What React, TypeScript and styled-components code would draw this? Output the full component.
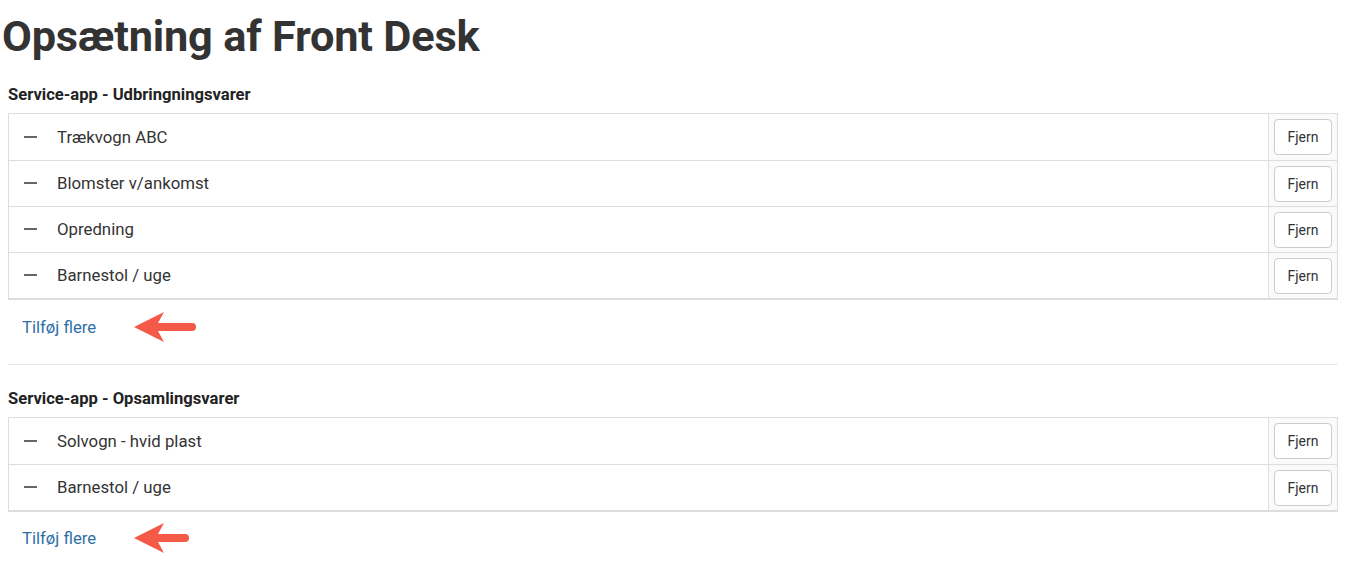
import React from "react";
import styled, { createGlobalStyle } from "styled-components";

const Global = createGlobalStyle`
  html, body { margin: 0; padding: 0; background: #fff; }
  body { font-family: Roboto, "Liberation Sans", Arial, sans-serif; color: #333; }
  * { box-sizing: border-box; }
`;

const Page = styled.div`
  padding: 0 11px 0 8px;
`;

const Title = styled.h1`
  margin: 0 0 0 -6px;
  padding-top: 9px;
  font-size: 43.3px;
  font-weight: 700;
  line-height: 56px;
  color: #333;
  letter-spacing: -0.2px;
`;

const SectionTitle = styled.h4`
  margin: 0;
  font-size: 16.6px;
  font-weight: 700;
  line-height: 20px;
  color: #222;
`;

const Section = styled.section<{ $top: number }>`
  padding-top: ${(p) => p.$top}px;
  display: flex;
  flex-direction: column;
`;

const Table = styled.div`
  margin-top: 8px;
  border: 1px solid #ddd;
  border-bottom: 2px solid #ddd;
  display: flex;
  flex-direction: column;
`;

const Row = styled.div`
  display: grid;
  grid-template-columns: 1fr 69px;
  height: 46px;
  & + & {
    border-top: 1px solid #ddd;
  }
`;

const NameCell = styled.div`
  display: flex;
  align-items: center;
  padding-left: 15px;
  padding-bottom: 1px;
  font-size: 16.8px;
  color: #333;
`;

const Dash = styled.span`
  display: inline-block;
  width: 13px;
  height: 2px;
  background: #666;
  margin-right: 20px;
`;

const ActionCell = styled.div`
  border-left: 1px solid #ddd;
  background: #fafafa;
  display: flex;
  align-items: center;
  justify-content: center;
`;

const RemoveButton = styled.button`
  width: 58px;
  height: 36px;
  border: 1px solid #ccc;
  border-radius: 4px;
  background: #fff;
  font-family: Roboto, "Liberation Sans", Arial, sans-serif;
  font-size: 14px;
  color: #333;
  padding: 0;
  cursor: pointer;
`;

const AddRow = styled.div<{ $h: number; $after: number }>`
  display: flex;
  align-items: center;
  gap: 38px;
  padding-left: 14px;
  height: ${(p) => p.$h}px;
  margin-bottom: ${(p) => p.$after}px;
`;

const AddLink = styled.a`
  font-size: 16.7px;
  color: #2f6fa7;
  text-decoration: none;
  cursor: pointer;
`;

const Divider = styled.hr`
  margin: 0;
  border: 0;
  border-top: 1px solid #e8e8e8;
`;

const Arrow = ({ w }: { w: number }) => (
  <svg width={w} height={32} viewBox={`0 0 ${w} 32`} style={{ display: "block" }}>
    <path
      d={`M0 16 L30 1 L24 12 L${w - 4} 12 A4 4 0 0 1 ${w - 4} 20 L24 20 L30 31 Z`}
      fill="#f45a47"
    />
  </svg>
);

const List = ({ items }: { items: string[] }) => (
  <Table>
    {items.map((t) => (
      <Row key={t}>
        <NameCell>
          <Dash />
          {t}
        </NameCell>
        <ActionCell>
          <RemoveButton>Fjern</RemoveButton>
        </ActionCell>
      </Row>
    ))}
  </Table>
);

export default function App() {
  return (
    <Page>
      <Global />
      <Title>Opsætning af Front Desk</Title>
      <Section $top={20}>
        <SectionTitle>Service-app - Udbringningsvarer</SectionTitle>
        <List items={["Trækvogn ABC", "Blomster v/ankomst", "Opredning", "Barnestol / uge"]} />
        <AddRow $h={54} $after={10}>
          <AddLink>Tilføj flere</AddLink>
          <Arrow w={62} />
        </AddRow>
        <Divider />
      </Section>
      <Section $top={24}>
        <SectionTitle>Service-app - Opsamlingsvarer</SectionTitle>
        <List items={["Solvogn - hvid plast", "Barnestol / uge"]} />
        <AddRow $h={52} $after={0}>
          <AddLink>Tilføj flere</AddLink>
          <Arrow w={55} />
        </AddRow>
      </Section>
    </Page>
  );
}
